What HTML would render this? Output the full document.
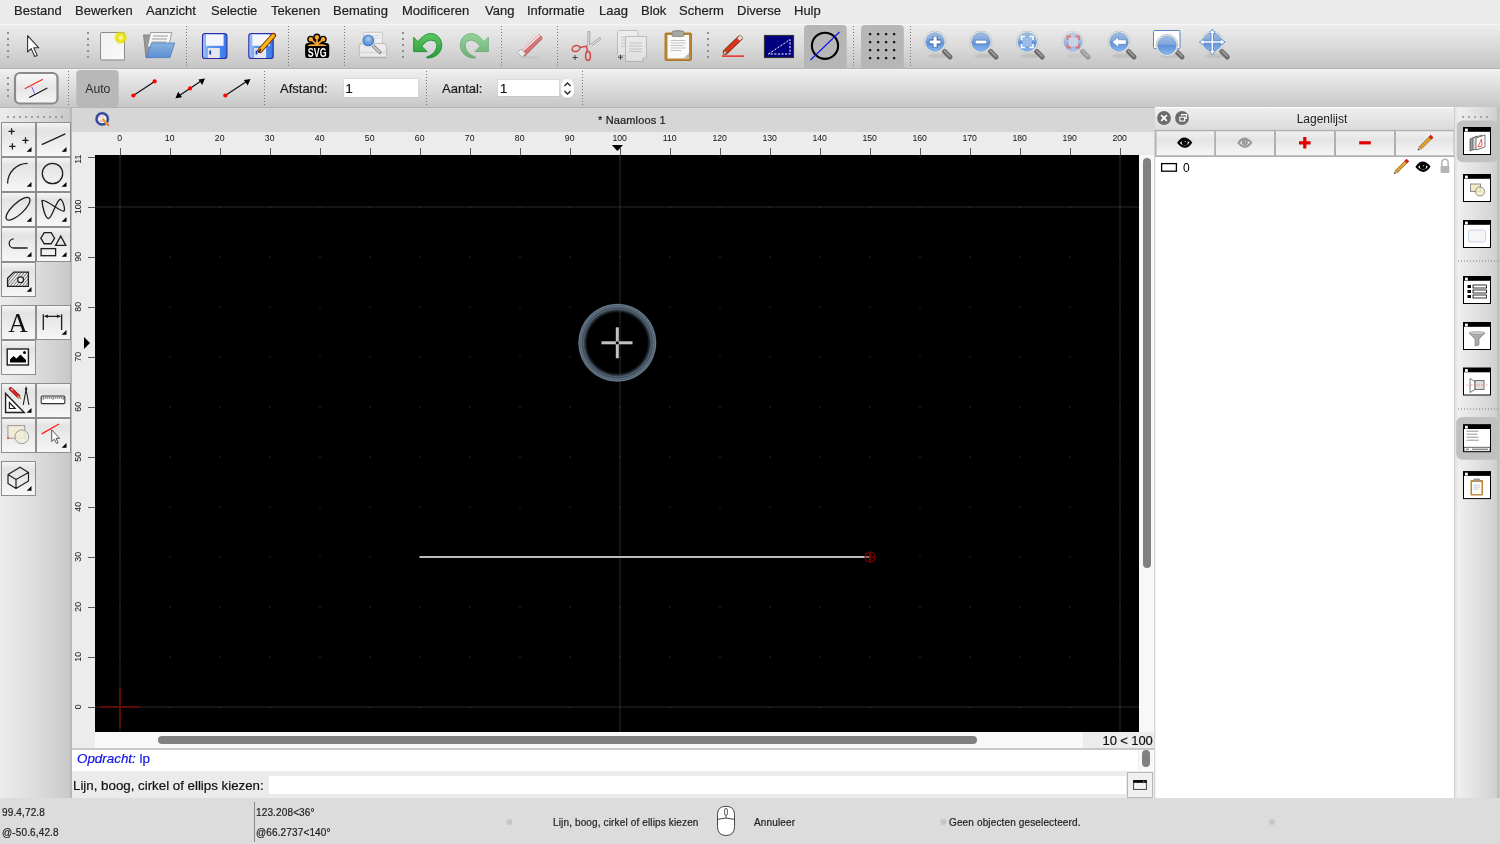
<!DOCTYPE html>
<html><head><meta charset="utf-8"><style>
*{box-sizing:border-box}
body{will-change:transform;margin:0;width:1500px;height:844px;overflow:hidden;position:relative;font-family:"Liberation Sans",sans-serif;background:#ececec;color:#222}
.a{position:absolute}
span{-webkit-text-stroke:0.2px currentColor}
.mi{position:absolute;top:3px;font-size:13px;color:#222;white-space:nowrap;-webkit-text-stroke:0.2px #222}
.sep{position:absolute;width:0;border-left:2px dotted #777}
.tb{position:absolute;border:1px solid #9a9a9a;background:linear-gradient(#f4f4f4,#e6e6e6 50%,#f2f2f2)}
.rl{position:absolute;font-size:9.5px;color:#111;text-align:center;width:30px;white-space:nowrap}
.rt{position:absolute;background:#555}
.st{position:absolute;font-size:10px;color:#1e1e1e;white-space:nowrap;letter-spacing:0.14px}
</style></head><body>
<!-- menu bar -->
<div class="a" style="left:0;top:0;width:1500px;height:24px;background:#ebebeb"></div>
<span class="mi" style="left:14px">Bestand</span>
<span class="mi" style="left:75px">Bewerken</span>
<span class="mi" style="left:146px">Aanzicht</span>
<span class="mi" style="left:211px">Selectie</span>
<span class="mi" style="left:271px">Tekenen</span>
<span class="mi" style="left:333px">Bemating</span>
<span class="mi" style="left:402px">Modificeren</span>
<span class="mi" style="left:485px">Vang</span>
<span class="mi" style="left:527px">Informatie</span>
<span class="mi" style="left:599px">Laag</span>
<span class="mi" style="left:641px">Blok</span>
<span class="mi" style="left:679px">Scherm</span>
<span class="mi" style="left:737px">Diverse</span>
<span class="mi" style="left:794px">Hulp</span>

<!-- toolbar 1 -->
<div class="a" style="left:0;top:24px;width:1500px;height:45px;background:linear-gradient(#ededed,#dadada 50%,#c5c5c5);border-top:1px solid #f6f6f6;border-bottom:1px solid #b2b2b2"></div>
<!-- toolbar 2 -->
<div class="a" style="left:0;top:69px;width:1500px;height:39px;background:linear-gradient(#efefef,#dcdcdc 50%,#c7c7c7);border-top:1px solid #f4f4f4;border-bottom:1px solid #b4b4b4"></div>

<!--TB-->
<svg class="a" style="left:0;top:24px" width="1260" height="84" viewBox="0 24 1260 84">
<defs>
<radialGradient id="glow" cx="0.5" cy="0.5" r="0.5"><stop offset="0" stop-color="#fff"/><stop offset="0.25" stop-color="#f4f060"/><stop offset="0.6" stop-color="#e8e000"/><stop offset="1" stop-color="#e8e000" stop-opacity="0"/></radialGradient>
<linearGradient id="page" x1="0" y1="0" x2="1" y2="1"><stop offset="0" stop-color="#f0f0f0"/><stop offset="1" stop-color="#fafafa"/></linearGradient>
<linearGradient id="fold" x1="0" y1="0" x2="0" y2="1"><stop offset="0" stop-color="#8ab4e0"/><stop offset="1" stop-color="#5a8fd0"/></linearGradient>
<linearGradient id="flop" x1="0" y1="0" x2="1" y2="0"><stop offset="0" stop-color="#a8c8f8"/><stop offset="0.3" stop-color="#5a98f0"/><stop offset="1" stop-color="#3a7ae8"/></linearGradient>
<radialGradient id="lens" cx="0.5" cy="0.35" r="0.6"><stop offset="0" stop-color="#b4cef0"/><stop offset="0.5" stop-color="#7aa6e0"/><stop offset="1" stop-color="#5a8ed8"/></radialGradient>
<linearGradient id="lens2" x1="0" y1="0" x2="0" y2="1"><stop offset="0" stop-color="#a2bce2"/><stop offset="0.45" stop-color="#7ea6dc"/><stop offset="0.5" stop-color="#5f90d6"/><stop offset="1" stop-color="#86b6f0"/></linearGradient>
<linearGradient id="grn" x1="0" y1="0" x2="0" y2="1"><stop offset="0" stop-color="#5cc860"/><stop offset="1" stop-color="#2a9a3a"/></linearGradient>
</defs>
<rect x="7" y="32" width="2" height="2" fill="#8e8e8e"/><rect x="7" y="38" width="2" height="2" fill="#8e8e8e"/><rect x="7" y="44" width="2" height="2" fill="#8e8e8e"/><rect x="7" y="50" width="2" height="2" fill="#8e8e8e"/><rect x="7" y="56" width="2" height="2" fill="#8e8e8e"/>
<rect x="87" y="32" width="2" height="2" fill="#8e8e8e"/><rect x="87" y="38" width="2" height="2" fill="#8e8e8e"/><rect x="87" y="44" width="2" height="2" fill="#8e8e8e"/><rect x="87" y="50" width="2" height="2" fill="#8e8e8e"/><rect x="87" y="56" width="2" height="2" fill="#8e8e8e"/>
<rect x="402" y="32" width="2" height="2" fill="#8e8e8e"/><rect x="402" y="38" width="2" height="2" fill="#8e8e8e"/><rect x="402" y="44" width="2" height="2" fill="#8e8e8e"/><rect x="402" y="50" width="2" height="2" fill="#8e8e8e"/><rect x="402" y="56" width="2" height="2" fill="#8e8e8e"/>
<rect x="707" y="32" width="2" height="2" fill="#8e8e8e"/><rect x="707" y="38" width="2" height="2" fill="#8e8e8e"/><rect x="707" y="44" width="2" height="2" fill="#8e8e8e"/><rect x="707" y="50" width="2" height="2" fill="#8e8e8e"/><rect x="707" y="56" width="2" height="2" fill="#8e8e8e"/>
<rect x="186.0" y="26" width="1" height="1" fill="#777"/><rect x="186.0" y="29" width="1" height="1" fill="#777"/><rect x="186.0" y="32" width="1" height="1" fill="#777"/><rect x="186.0" y="35" width="1" height="1" fill="#777"/><rect x="186.0" y="38" width="1" height="1" fill="#777"/><rect x="186.0" y="41" width="1" height="1" fill="#777"/><rect x="186.0" y="44" width="1" height="1" fill="#777"/><rect x="186.0" y="47" width="1" height="1" fill="#777"/><rect x="186.0" y="50" width="1" height="1" fill="#777"/><rect x="186.0" y="53" width="1" height="1" fill="#777"/><rect x="186.0" y="56" width="1" height="1" fill="#777"/><rect x="186.0" y="59" width="1" height="1" fill="#777"/><rect x="186.0" y="62" width="1" height="1" fill="#777"/><rect x="186.0" y="65" width="1" height="1" fill="#777"/>
<rect x="288.0" y="26" width="1" height="1" fill="#777"/><rect x="288.0" y="29" width="1" height="1" fill="#777"/><rect x="288.0" y="32" width="1" height="1" fill="#777"/><rect x="288.0" y="35" width="1" height="1" fill="#777"/><rect x="288.0" y="38" width="1" height="1" fill="#777"/><rect x="288.0" y="41" width="1" height="1" fill="#777"/><rect x="288.0" y="44" width="1" height="1" fill="#777"/><rect x="288.0" y="47" width="1" height="1" fill="#777"/><rect x="288.0" y="50" width="1" height="1" fill="#777"/><rect x="288.0" y="53" width="1" height="1" fill="#777"/><rect x="288.0" y="56" width="1" height="1" fill="#777"/><rect x="288.0" y="59" width="1" height="1" fill="#777"/><rect x="288.0" y="62" width="1" height="1" fill="#777"/><rect x="288.0" y="65" width="1" height="1" fill="#777"/>
<rect x="344.0" y="26" width="1" height="1" fill="#777"/><rect x="344.0" y="29" width="1" height="1" fill="#777"/><rect x="344.0" y="32" width="1" height="1" fill="#777"/><rect x="344.0" y="35" width="1" height="1" fill="#777"/><rect x="344.0" y="38" width="1" height="1" fill="#777"/><rect x="344.0" y="41" width="1" height="1" fill="#777"/><rect x="344.0" y="44" width="1" height="1" fill="#777"/><rect x="344.0" y="47" width="1" height="1" fill="#777"/><rect x="344.0" y="50" width="1" height="1" fill="#777"/><rect x="344.0" y="53" width="1" height="1" fill="#777"/><rect x="344.0" y="56" width="1" height="1" fill="#777"/><rect x="344.0" y="59" width="1" height="1" fill="#777"/><rect x="344.0" y="62" width="1" height="1" fill="#777"/><rect x="344.0" y="65" width="1" height="1" fill="#777"/>
<rect x="501.0" y="26" width="1" height="1" fill="#777"/><rect x="501.0" y="29" width="1" height="1" fill="#777"/><rect x="501.0" y="32" width="1" height="1" fill="#777"/><rect x="501.0" y="35" width="1" height="1" fill="#777"/><rect x="501.0" y="38" width="1" height="1" fill="#777"/><rect x="501.0" y="41" width="1" height="1" fill="#777"/><rect x="501.0" y="44" width="1" height="1" fill="#777"/><rect x="501.0" y="47" width="1" height="1" fill="#777"/><rect x="501.0" y="50" width="1" height="1" fill="#777"/><rect x="501.0" y="53" width="1" height="1" fill="#777"/><rect x="501.0" y="56" width="1" height="1" fill="#777"/><rect x="501.0" y="59" width="1" height="1" fill="#777"/><rect x="501.0" y="62" width="1" height="1" fill="#777"/><rect x="501.0" y="65" width="1" height="1" fill="#777"/>
<rect x="557.0" y="26" width="1" height="1" fill="#777"/><rect x="557.0" y="29" width="1" height="1" fill="#777"/><rect x="557.0" y="32" width="1" height="1" fill="#777"/><rect x="557.0" y="35" width="1" height="1" fill="#777"/><rect x="557.0" y="38" width="1" height="1" fill="#777"/><rect x="557.0" y="41" width="1" height="1" fill="#777"/><rect x="557.0" y="44" width="1" height="1" fill="#777"/><rect x="557.0" y="47" width="1" height="1" fill="#777"/><rect x="557.0" y="50" width="1" height="1" fill="#777"/><rect x="557.0" y="53" width="1" height="1" fill="#777"/><rect x="557.0" y="56" width="1" height="1" fill="#777"/><rect x="557.0" y="59" width="1" height="1" fill="#777"/><rect x="557.0" y="62" width="1" height="1" fill="#777"/><rect x="557.0" y="65" width="1" height="1" fill="#777"/>
<rect x="853.0" y="26" width="1" height="1" fill="#777"/><rect x="853.0" y="29" width="1" height="1" fill="#777"/><rect x="853.0" y="32" width="1" height="1" fill="#777"/><rect x="853.0" y="35" width="1" height="1" fill="#777"/><rect x="853.0" y="38" width="1" height="1" fill="#777"/><rect x="853.0" y="41" width="1" height="1" fill="#777"/><rect x="853.0" y="44" width="1" height="1" fill="#777"/><rect x="853.0" y="47" width="1" height="1" fill="#777"/><rect x="853.0" y="50" width="1" height="1" fill="#777"/><rect x="853.0" y="53" width="1" height="1" fill="#777"/><rect x="853.0" y="56" width="1" height="1" fill="#777"/><rect x="853.0" y="59" width="1" height="1" fill="#777"/><rect x="853.0" y="62" width="1" height="1" fill="#777"/><rect x="853.0" y="65" width="1" height="1" fill="#777"/>
<rect x="910.0" y="26" width="1" height="1" fill="#777"/><rect x="910.0" y="29" width="1" height="1" fill="#777"/><rect x="910.0" y="32" width="1" height="1" fill="#777"/><rect x="910.0" y="35" width="1" height="1" fill="#777"/><rect x="910.0" y="38" width="1" height="1" fill="#777"/><rect x="910.0" y="41" width="1" height="1" fill="#777"/><rect x="910.0" y="44" width="1" height="1" fill="#777"/><rect x="910.0" y="47" width="1" height="1" fill="#777"/><rect x="910.0" y="50" width="1" height="1" fill="#777"/><rect x="910.0" y="53" width="1" height="1" fill="#777"/><rect x="910.0" y="56" width="1" height="1" fill="#777"/><rect x="910.0" y="59" width="1" height="1" fill="#777"/><rect x="910.0" y="62" width="1" height="1" fill="#777"/><rect x="910.0" y="65" width="1" height="1" fill="#777"/>
<path d="M27.6 35.7V52L31.2 48.6L34.7 56.5L37.2 55.4L33.8 47.8H38.8Z" fill="#fff" stroke="#333" stroke-width="1.1" stroke-linejoin="round"/>
<rect x="100.5" y="32.5" width="24" height="27.5" rx="1" fill="url(#page)" stroke="#8a8a8a"/><rect x="101" y="59.6" width="24" height="1.6" fill="#aaa" opacity="0.6"/>
<circle cx="120.7" cy="37.7" r="7" fill="url(#glow)"/>
<path d="M143.5 35H151V57.5H146Z" fill="#9a9a9a" stroke="#777" stroke-width="0.8"/>
<path d="M150.5 32.5H171.8L168.5 47H147.5Z" fill="#f6f6f6" stroke="#8a8a8a" stroke-width="0.8"/><path d="M153 36h15M152 39h15M151.5 42h15" stroke="#bbb" stroke-width="1.4"/>
<path d="M151.5 43H174.7L170 57.6H146Z" fill="url(#fold)" stroke="#4a7cc0" stroke-width="0.8"/>
<rect x="202.5" y="33.5" width="24.4" height="25" rx="2.6" fill="url(#flop)" stroke="#2a2aa0" stroke-width="1.1"/><rect x="206" y="34.4" width="17.6" height="11.4" fill="#f4f6fc"/><rect x="207.8" y="48" width="12" height="10" fill="#e6e6ee"/><rect x="209.3" y="50.5" width="1.8" height="4" fill="#1a3ad0"/>
<rect x="248.8" y="33.5" width="24.4" height="25" rx="2.6" fill="url(#flop)" stroke="#2a2aa0" stroke-width="1.1"/><rect x="252.3" y="34.4" width="17.6" height="11.4" fill="#f4f6fc"/><rect x="254.10000000000002" y="48" width="12" height="10" fill="#e6e6ee"/><rect x="255.60000000000002" y="50.5" width="1.8" height="4" fill="#1a3ad0"/>
<path d="M260 50.5L273.5 35.5" stroke="#8a2a00" stroke-width="5.2" stroke-linecap="round"/><path d="M260.3 50.2L273.3 35.7" stroke="#f8b818" stroke-width="3.4" stroke-linecap="round"/><path d="M258.5 52.5L261 49" stroke="#333" stroke-width="1.6"/>
<path d="M317 44.5L310.8 39.3M317 44.5L323.1 39.3M317 44.5V37.2" stroke="#000" stroke-width="4"/>
<circle cx="316.9" cy="37.2" r="3.6" fill="#000"/>
<circle cx="310.8" cy="39.3" r="3.6" fill="#000"/>
<circle cx="323.1" cy="39.3" r="3.6" fill="#000"/>
<path d="M306 47Q306 43.5 309 43.2L313 42.5Q317 41 321 42.5L325 43.2Q328.5 43.5 328.5 47Z" fill="#000"/>
<rect x="305.1" y="42.9" width="24.1" height="15.2" rx="3.2" fill="#000"/>
<path d="M317 44.5L310.8 39.3M317 44.5L323.1 39.3M317 44.5V37.2" stroke="#f7a530" stroke-width="1.7"/>
<circle cx="316.9" cy="37.2" r="2.2" fill="#f7a530"/>
<circle cx="310.8" cy="39.3" r="2.2" fill="#f7a530"/>
<circle cx="323.1" cy="39.3" r="2.2" fill="#f7a530"/>
<path d="M307.3 45.9Q309 44 312 44.2H322Q325 44 327 45.9Z" fill="#f7a530"/>
<text transform="translate(317.2 56.5) scale(0.66 1)" text-anchor="middle" font-family="Liberation Sans" font-weight="bold" font-size="13.4" fill="#fff">SVG</text>
<rect x="363.5" y="32.3" width="18.8" height="14" rx="1" fill="#f2f2f2" stroke="#c4c4c4" stroke-width="0.9"/><path d="M370 35.5h10M370 38h10" stroke="#d4d4d4" stroke-width="1.2"/>
<path d="M359.3 47Q359.3 43.4 362.5 43.4H383.5Q386.7 43.4 386.7 47V55.5Q386.7 57.2 385 57.2H361Q359.3 57.2 359.3 55.5Z" fill="#ebebeb" stroke="#b4b4b4" stroke-width="0.9"/><path d="M360 52.5H386" stroke="#d6d6d6" stroke-width="1.2"/><rect x="360" y="57" width="26" height="1.4" fill="#999" opacity="0.45"/>
<path d="M373 45.8L379.8 52.3" stroke="#8a8a8a" stroke-width="3.6" stroke-linecap="round"/><path d="M373.3 46.1L379.5 52" stroke="#c8c8c8" stroke-width="1.8" stroke-linecap="round"/>
<circle cx="368.3" cy="40.5" r="6.6" fill="#fafafa" stroke="#d0d0d0" stroke-width="0.6"/><circle cx="368.3" cy="40.5" r="5.3" fill="url(#lens)" stroke="#3f7ed0" stroke-width="1.1"/>
<path d="M413.7 37.2L417.9 41.8C421 38 425.5 33.6 430.7 33.6C436.8 33.6 441.7 38.5 441.7 45.2C441.7 52 436 58 427.7 58L426.2 57.3C431.5 55.5 436.8 51.5 436.8 45.2C436.8 42 434 40.2 430.7 40.2C427 40.2 424 43.5 421.8 46.3L427 51.6H413.7Z" fill="url(#grn)" stroke="#1a8a35" stroke-width="0.9" stroke-linejoin="round"/>
<g opacity="0.58" transform="translate(902 0) scale(-1 1)"><path d="M413.7 37.2L417.9 41.8C421 38 425.5 33.6 430.7 33.6C436.8 33.6 441.7 38.5 441.7 45.2C441.7 52 436 58 427.7 58L426.2 57.3C431.5 55.5 436.8 51.5 436.8 45.2C436.8 42 434 40.2 430.7 40.2C427 40.2 424 43.5 421.8 46.3L427 51.6H413.7Z" fill="url(#grn)" stroke="#1a8a35" stroke-width="0.9" stroke-linejoin="round"/></g>
<g opacity="0.55"><path d="M519 51L536.5 34.5Q538 33 539.5 34.5L541.6 36.6Q543 38 541.5 39.5L524.5 56.5Z" fill="#d02020" stroke="#802020" stroke-width="0.8"/><path d="M521 49.5L538.5 33.5M522.5 51L540 35" stroke="#fff" stroke-width="1.6"/><path d="M517.5 52.5L521 49L525.5 53.5L522 57Z" fill="#fff" stroke="#888" stroke-width="0.8"/></g><ellipse cx="530" cy="57.5" rx="12" ry="1.2" fill="#bbb" opacity="0.5"/>
<g opacity="0.72"><path d="M587.8 46L588 31.5L590 31.8L589.5 45M590.5 44.5L600 37.5L600.3 39.5L591.5 46" fill="#eee" stroke="#666" stroke-width="0.7"/><ellipse cx="576" cy="48.5" rx="4" ry="2.8" transform="rotate(-20 576 48.5)" fill="none" stroke="#d01818" stroke-width="1.6"/><ellipse cx="588" cy="56" rx="2.4" ry="4.4" fill="none" stroke="#d01818" stroke-width="1.6"/><path d="M579.8 47.5L586.5 46.3L587.5 51.5" fill="none" stroke="#d01818" stroke-width="1.6"/></g><path d="M572.5 57.5h5M575 55v5" stroke="#333" stroke-width="0.9"/>
<g opacity="0.5"><rect x="617.5" y="30.5" width="20.5" height="25" rx="1" fill="#f4f4f4" stroke="#999"/><path d="M621 37h12M621 40h12M621 43h12M621 46h12" stroke="#aaa"/><path d="M625.5 36.5H646.5V57.5L643 61.4H625.5Z" fill="#f4f4f4" stroke="#999"/><path d="M629 43h13M629 46h13M629 49h13M629 51.5h13" stroke="#aaa"/><path d="M643 61.4V58H646.5" fill="#ddd" stroke="#999"/></g><path d="M618 57.2h5M620.5 54.7v5" stroke="#333" stroke-width="0.9"/>
<rect x="665" y="33" width="26.5" height="27.5" rx="1.2" fill="#c08530" stroke="#a06a20" stroke-width="0.8"/><rect x="667.5" y="35" width="21.5" height="23.5" fill="#fafafa"/><path d="M670.5 40.5h15M670.5 43h15M670.5 45.5h13M670.5 48h15M670.5 50.5h11" stroke="#bdbdbd" stroke-width="0.9"/><path d="M683.5 58.5L689 53V58.5Z" fill="#bbb"/><rect x="672" y="31" width="12" height="5.5" rx="1.2" fill="#a8a89e" stroke="#777" stroke-width="0.7"/><rect x="675" y="30" width="6" height="2" fill="#999"/>
<rect x="722" y="55.5" width="22" height="1.2" fill="#e00"/>
<path d="M725.5 52L740 38" stroke="#7a3a10" stroke-width="5.4" stroke-linecap="round"/><path d="M725.7 51.8L740 38" stroke="#e03020" stroke-width="3.8" stroke-linecap="round"/><path d="M738.5 39.5L741.5 36.5" stroke="#ddd" stroke-width="3.8"/><path d="M723 55L724.5 50.5L727 53Z" fill="#e8c8a0" stroke="#555" stroke-width="0.6"/>
<rect x="764.5" y="35.5" width="29" height="22" fill="#000080" stroke="#333" stroke-width="1.2"/><path d="M768.5 54L790 39.5V54Z" fill="none" stroke="#fff" stroke-width="1" stroke-dasharray="2.2 1.4"/>
<rect x="804" y="25" width="42.7" height="44" rx="4" fill="#b6b6b6"/>
<circle cx="825" cy="45.8" r="13.1" fill="none" stroke="#000" stroke-width="2.1"/><path d="M810.5 60L839.5 32" stroke="#1010f0" stroke-width="1.1"/>
<rect x="861" y="25" width="42.8" height="44" rx="4" fill="#b6b6b6"/>
<rect x="869" y="33" width="2.2" height="2.2" fill="#111"/>
<rect x="869" y="41" width="2.2" height="2.2" fill="#111"/>
<rect x="869" y="49" width="2.2" height="2.2" fill="#111"/>
<rect x="869" y="57" width="2.2" height="2.2" fill="#111"/>
<rect x="877" y="33" width="2.2" height="2.2" fill="#111"/>
<rect x="877" y="41" width="2.2" height="2.2" fill="#111"/>
<rect x="877" y="49" width="2.2" height="2.2" fill="#111"/>
<rect x="877" y="57" width="2.2" height="2.2" fill="#111"/>
<rect x="885" y="33" width="2.2" height="2.2" fill="#111"/>
<rect x="885" y="41" width="2.2" height="2.2" fill="#111"/>
<rect x="885" y="49" width="2.2" height="2.2" fill="#111"/>
<rect x="885" y="57" width="2.2" height="2.2" fill="#111"/>
<rect x="893" y="33" width="2.2" height="2.2" fill="#111"/>
<rect x="893" y="41" width="2.2" height="2.2" fill="#111"/>
<rect x="893" y="49" width="2.2" height="2.2" fill="#111"/>
<rect x="893" y="57" width="2.2" height="2.2" fill="#111"/>
<ellipse cx="938" cy="56" rx="10" ry="2.2" fill="#888" opacity="0.22"/><path d="M944.3 51.3L950 57" stroke="#6c6c6c" stroke-width="5" stroke-linecap="round"/><path d="M944.5 50.8L950 56.3" stroke="#a4a4a4" stroke-width="1.4" stroke-linecap="round"/><circle cx="935" cy="42" r="11" fill="#f3f3ee" stroke="#c2c2ba" stroke-width="0.9"/><circle cx="935" cy="42" r="9.4" fill="url(#lens2)" stroke="#6a94cc" stroke-width="0.5"/><path d="M929.2 42h11.9M935.1 36.1v11.7" stroke="#2a5aa0" stroke-width="4.8"/><path d="M929.7 42h10.9M935.1 36.6v10.7" stroke="#fff" stroke-width="3.2"/>
<ellipse cx="984" cy="56" rx="10" ry="2.2" fill="#888" opacity="0.22"/><path d="M990.3 51.3L996 57" stroke="#6c6c6c" stroke-width="5" stroke-linecap="round"/><path d="M990.5 50.8L996 56.3" stroke="#a4a4a4" stroke-width="1.4" stroke-linecap="round"/><circle cx="981" cy="42" r="11" fill="#f3f3ee" stroke="#c2c2ba" stroke-width="0.9"/><circle cx="981" cy="42" r="9.4" fill="url(#lens2)" stroke="#6a94cc" stroke-width="0.5"/><path d="M975 42h12" stroke="#3a6ab0" stroke-width="4.4"/><path d="M975.5 42h11" stroke="#fff" stroke-width="3"/>
<ellipse cx="1030.2" cy="56" rx="10" ry="2.2" fill="#888" opacity="0.22"/><path d="M1036.5 51.3L1042.2 57" stroke="#6c6c6c" stroke-width="5" stroke-linecap="round"/><path d="M1036.7 50.8L1042.2 56.3" stroke="#a4a4a4" stroke-width="1.4" stroke-linecap="round"/><circle cx="1027.2" cy="42" r="11" fill="#f3f3ee" stroke="#c2c2ba" stroke-width="0.9"/><circle cx="1027.2" cy="42" r="9.4" fill="url(#lens2)" stroke="#6a94cc" stroke-width="0.5"/><rect x="1022.5" y="37.5" width="9.4" height="9" fill="#9cbce8"/><path d="M1021.5 40V36.5H1025M1029.5 36.5H1033V40M1033 44V47.5H1029.5M1025 47.5H1021.5V44" fill="none" stroke="#fff" stroke-width="1.6"/>
<g opacity="0.55"><ellipse cx="1076" cy="56" rx="10" ry="2.2" fill="#888" opacity="0.22"/><path d="M1082.3 51.3L1088 57" stroke="#6c6c6c" stroke-width="5" stroke-linecap="round"/><path d="M1082.5 50.8L1088 56.3" stroke="#a4a4a4" stroke-width="1.4" stroke-linecap="round"/><circle cx="1073" cy="42" r="11" fill="#f3f3ee" stroke="#c2c2ba" stroke-width="0.9"/><circle cx="1073" cy="42" r="9.4" fill="url(#lens2)" stroke="#6a94cc" stroke-width="0.5"/><rect x="1068.5" y="37.5" width="9.4" height="9" fill="#b8cce8"/><path d="M1067.5 40V36.5H1071M1075.5 36.5H1079V40M1079 44V47.5H1075.5M1071 47.5H1067.5V44" fill="none" stroke="#e02020" stroke-width="1.8"/></g>
<ellipse cx="1122" cy="56" rx="10" ry="2.2" fill="#888" opacity="0.22"/><path d="M1128.3 51.3L1134 57" stroke="#6c6c6c" stroke-width="5" stroke-linecap="round"/><path d="M1128.5 50.8L1134 56.3" stroke="#a4a4a4" stroke-width="1.4" stroke-linecap="round"/><circle cx="1119" cy="42" r="11" fill="#f3f3ee" stroke="#c2c2ba" stroke-width="0.9"/><circle cx="1119" cy="42" r="9.4" fill="url(#lens2)" stroke="#6a94cc" stroke-width="0.5"/><path d="M1112 42L1118.5 37V39.8H1126.2V44.3H1118.5V47.2Z" fill="#fff" stroke="#3a6ab0" stroke-width="0.5"/>
<rect x="1153.5" y="30.5" width="26.5" height="18" rx="1" fill="#fff" stroke="#5a86c8" stroke-width="1"/>
<ellipse cx="1170" cy="56" rx="10" ry="2.2" fill="#888" opacity="0.22"/><path d="M1176.3 51.3L1182 57" stroke="#6c6c6c" stroke-width="5" stroke-linecap="round"/><path d="M1176.5 50.8L1182 56.3" stroke="#a4a4a4" stroke-width="1.4" stroke-linecap="round"/><circle cx="1167" cy="45.3" r="11" fill="#f3f3ee" stroke="#c2c2ba" stroke-width="0.9"/><circle cx="1167" cy="45.3" r="9.4" fill="url(#lens2)" stroke="#6a94cc" stroke-width="0.5"/>
<ellipse cx="1215.3" cy="56" rx="10" ry="2.2" fill="#888" opacity="0.22"/><path d="M1221.6 51.3L1227.3 57" stroke="#6c6c6c" stroke-width="5" stroke-linecap="round"/><path d="M1221.8 50.8L1227.3 56.3" stroke="#a4a4a4" stroke-width="1.4" stroke-linecap="round"/><circle cx="1212.3" cy="42" r="11" fill="#f3f3ee" stroke="#c2c2ba" stroke-width="0.9"/><circle cx="1212.3" cy="42" r="9.4" fill="url(#lens2)" stroke="#6a94cc" stroke-width="0.5"/><path d="M1212.30 29.00L1215.30 33.60L1213.50 33.60L1213.50 40.80L1220.70 40.80L1220.70 39.00L1225.30 42.00L1220.70 45.00L1220.70 43.20L1213.50 43.20L1213.50 50.40L1215.30 50.40L1212.30 55.00L1209.30 50.40L1211.10 50.40L1211.10 43.20L1203.90 43.20L1203.90 45.00L1199.30 42.00L1203.90 39.00L1203.90 40.80L1211.10 40.80L1211.10 33.60L1209.30 33.60Z" fill="#fff" stroke="#4f7fc8" stroke-width="0.8" stroke-linejoin="round"/>
<rect x="7" y="77" width="2" height="2" fill="#8e8e8e"/><rect x="7" y="83" width="2" height="2" fill="#8e8e8e"/><rect x="7" y="89" width="2" height="2" fill="#8e8e8e"/><rect x="7" y="95" width="2" height="2" fill="#8e8e8e"/>
<linearGradient id="b2g" x1="0" y1="0" x2="0" y2="1"><stop offset="0" stop-color="#f8f8f8"/><stop offset="0.5" stop-color="#e6e6e6"/><stop offset="1" stop-color="#f6f6f6"/></linearGradient><rect x="15" y="73" width="42.5" height="30.5" rx="5" fill="url(#b2g)" stroke="#8a8a8a" stroke-width="2.2"/>
<path d="M24.8 88.7L42.8 79.3" stroke="#ff2020" stroke-width="1.1"/><path d="M29.2 97.4L47.3 88.1" stroke="#111" stroke-width="1.1"/><path d="M31.7 86.8L34.7 93.6" stroke="#5050ff" stroke-width="0.9"/>
<rect x="68.0" y="71" width="1" height="1" fill="#777"/><rect x="68.0" y="74" width="1" height="1" fill="#777"/><rect x="68.0" y="77" width="1" height="1" fill="#777"/><rect x="68.0" y="80" width="1" height="1" fill="#777"/><rect x="68.0" y="83" width="1" height="1" fill="#777"/><rect x="68.0" y="86" width="1" height="1" fill="#777"/><rect x="68.0" y="89" width="1" height="1" fill="#777"/><rect x="68.0" y="92" width="1" height="1" fill="#777"/><rect x="68.0" y="95" width="1" height="1" fill="#777"/><rect x="68.0" y="98" width="1" height="1" fill="#777"/><rect x="68.0" y="101" width="1" height="1" fill="#777"/><rect x="68.0" y="104" width="1" height="1" fill="#777"/>
<rect x="76.3" y="69.9" width="42.4" height="37" rx="4" fill="#b8b8b8"/>
<text x="97.8" y="93" text-anchor="middle" font-family="Liberation Sans" font-size="12.2" fill="#2a2a2a">Auto</text>
<path d="M133.4 95.5L154.6 81.4" stroke="#111" stroke-width="1.2"/><circle cx="133.4" cy="95.5" r="2.1" fill="#f00"/><circle cx="154.6" cy="81.4" r="2.1" fill="#f00"/>
<path d="M178 96.5L202.5 80" stroke="#111" stroke-width="1.2"/><path d="M175.4 98.3L178.2 91.8L182 97.2ZM205 78.4L202.2 84.9L198.4 79.5Z" fill="#000"/><circle cx="190" cy="88.4" r="2.1" fill="#f00"/>
<path d="M225.3 95.5L248 80.5" stroke="#111" stroke-width="1.2"/><path d="M250.5 78.9L247.7 85.4L243.9 80Z" fill="#000"/><circle cx="225.3" cy="95.5" r="2.1" fill="#f00"/>
<rect x="264.0" y="71" width="1" height="1" fill="#777"/><rect x="264.0" y="74" width="1" height="1" fill="#777"/><rect x="264.0" y="77" width="1" height="1" fill="#777"/><rect x="264.0" y="80" width="1" height="1" fill="#777"/><rect x="264.0" y="83" width="1" height="1" fill="#777"/><rect x="264.0" y="86" width="1" height="1" fill="#777"/><rect x="264.0" y="89" width="1" height="1" fill="#777"/><rect x="264.0" y="92" width="1" height="1" fill="#777"/><rect x="264.0" y="95" width="1" height="1" fill="#777"/><rect x="264.0" y="98" width="1" height="1" fill="#777"/><rect x="264.0" y="101" width="1" height="1" fill="#777"/><rect x="264.0" y="104" width="1" height="1" fill="#777"/>
<rect x="426.0" y="71" width="1" height="1" fill="#777"/><rect x="426.0" y="74" width="1" height="1" fill="#777"/><rect x="426.0" y="77" width="1" height="1" fill="#777"/><rect x="426.0" y="80" width="1" height="1" fill="#777"/><rect x="426.0" y="83" width="1" height="1" fill="#777"/><rect x="426.0" y="86" width="1" height="1" fill="#777"/><rect x="426.0" y="89" width="1" height="1" fill="#777"/><rect x="426.0" y="92" width="1" height="1" fill="#777"/><rect x="426.0" y="95" width="1" height="1" fill="#777"/><rect x="426.0" y="98" width="1" height="1" fill="#777"/><rect x="426.0" y="101" width="1" height="1" fill="#777"/><rect x="426.0" y="104" width="1" height="1" fill="#777"/>
<rect x="582.0" y="71" width="1" height="1" fill="#777"/><rect x="582.0" y="74" width="1" height="1" fill="#777"/><rect x="582.0" y="77" width="1" height="1" fill="#777"/><rect x="582.0" y="80" width="1" height="1" fill="#777"/><rect x="582.0" y="83" width="1" height="1" fill="#777"/><rect x="582.0" y="86" width="1" height="1" fill="#777"/><rect x="582.0" y="89" width="1" height="1" fill="#777"/><rect x="582.0" y="92" width="1" height="1" fill="#777"/><rect x="582.0" y="95" width="1" height="1" fill="#777"/><rect x="582.0" y="98" width="1" height="1" fill="#777"/><rect x="582.0" y="101" width="1" height="1" fill="#777"/><rect x="582.0" y="104" width="1" height="1" fill="#777"/>
</svg>
<!--/TB-->
<!-- tb2 inputs -->
<span class="a" style="left:280px;top:81px;font-size:13px;color:#1a1a1a">Afstand:</span>
<div class="a" style="left:344px;top:79px;width:74px;height:19px;background:#fff;border-bottom:1px solid #c8c8c8;box-shadow:0 0 0 0.5px #d0d0d0"></div>
<span class="a" style="left:345.5px;top:81px;font-size:13px;color:#111">1</span>
<span class="a" style="left:442px;top:81px;font-size:13px;color:#1a1a1a">Aantal:</span>
<div class="a" style="left:498px;top:80px;width:61px;height:17px;background:#fff;border-bottom:1px solid #c8c8c8;box-shadow:0 0 0 0.5px #d0d0d0"></div>
<span class="a" style="left:500px;top:81px;font-size:13px;color:#111">1</span>
<div class="a" style="left:561px;top:79px;width:13px;height:19px;background:#fff;border-radius:6px;box-shadow:0 0.5px 1px #aaa"></div>
<svg class="a" style="left:561px;top:79px" width="13" height="19" viewBox="0 0 13 19"><path d="M3.5 7L6.5 4L9.5 7M3.5 12L6.5 15L9.5 12" fill="none" stroke="#222" stroke-width="1.3"/></svg>
<!-- left dock -->
<!--LEFT-->
<svg class="a" style="left:0;top:108px" width="72" height="690" viewBox="0 108 72 690">
<defs><linearGradient id="bg" x1="0" y1="0" x2="0" y2="1"><stop offset="0" stop-color="#f6f6f6"/><stop offset="0.22" stop-color="#e3e3e3"/><stop offset="1" stop-color="#f7f7f7"/></linearGradient><linearGradient id="dk" x1="0" y1="0" x2="1" y2="0"><stop offset="0" stop-color="#ececec"/><stop offset="0.5" stop-color="#dddddd"/><stop offset="1" stop-color="#c9c9c9"/></linearGradient></defs>
<rect x="0" y="108" width="70" height="690" fill="url(#dk)"/>
<rect x="70" y="108" width="2" height="690" fill="#b8b8b8"/>
<rect x="7" y="116" width="2" height="2" fill="#9c9c9c"/>
<rect x="13" y="116" width="2" height="2" fill="#9c9c9c"/>
<rect x="19" y="116" width="2" height="2" fill="#9c9c9c"/>
<rect x="25" y="116" width="2" height="2" fill="#9c9c9c"/>
<rect x="31" y="116" width="2" height="2" fill="#9c9c9c"/>
<rect x="37" y="116" width="2" height="2" fill="#9c9c9c"/>
<rect x="43" y="116" width="2" height="2" fill="#9c9c9c"/>
<rect x="49" y="116" width="2" height="2" fill="#9c9c9c"/>
<rect x="55" y="116" width="2" height="2" fill="#9c9c9c"/>
<rect x="61" y="116" width="2" height="2" fill="#9c9c9c"/>
<rect x="1.5" y="122.5" width="34" height="34" fill="url(#bg)" stroke="#8e8e8e" stroke-width="1"/>
<rect x="36.5" y="122.5" width="34" height="34" fill="url(#bg)" stroke="#8e8e8e" stroke-width="1"/>
<rect x="1.5" y="157.5" width="34" height="34" fill="url(#bg)" stroke="#8e8e8e" stroke-width="1"/>
<rect x="36.5" y="157.5" width="34" height="34" fill="url(#bg)" stroke="#8e8e8e" stroke-width="1"/>
<rect x="1.5" y="192.5" width="34" height="34" fill="url(#bg)" stroke="#8e8e8e" stroke-width="1"/>
<rect x="36.5" y="192.5" width="34" height="34" fill="url(#bg)" stroke="#8e8e8e" stroke-width="1"/>
<rect x="1.5" y="227.5" width="34" height="34" fill="url(#bg)" stroke="#8e8e8e" stroke-width="1"/>
<rect x="36.5" y="227.5" width="34" height="34" fill="url(#bg)" stroke="#8e8e8e" stroke-width="1"/>
<rect x="1.5" y="262.5" width="34" height="34" fill="url(#bg)" stroke="#8e8e8e" stroke-width="1"/>
<rect x="1.5" y="305.5" width="34" height="34" fill="url(#bg)" stroke="#8e8e8e" stroke-width="1"/>
<rect x="1.5" y="340.5" width="34" height="34" fill="url(#bg)" stroke="#8e8e8e" stroke-width="1"/>
<rect x="36.5" y="305.5" width="34" height="34" fill="url(#bg)" stroke="#8e8e8e" stroke-width="1"/>
<rect x="1.5" y="383.5" width="34" height="34" fill="url(#bg)" stroke="#8e8e8e" stroke-width="1"/>
<rect x="36.5" y="383.5" width="34" height="34" fill="url(#bg)" stroke="#8e8e8e" stroke-width="1"/>
<rect x="1.5" y="418.5" width="34" height="34" fill="url(#bg)" stroke="#8e8e8e" stroke-width="1"/>
<rect x="36.5" y="418.5" width="34" height="34" fill="url(#bg)" stroke="#8e8e8e" stroke-width="1"/>
<rect x="1.5" y="461.5" width="34" height="34" fill="url(#bg)" stroke="#8e8e8e" stroke-width="1"/>
<path d="M8.5 131.4h6.2M11.6 128.3v6.2M22.4 140.3h6.2M25.5 137.2v6.2M9.3 146.3h6.2M12.4 143.2v6.2" fill="none" stroke="#1e1e1e" stroke-width="1.3" stroke-width="1.4"/>
<path d="M31.5 147V151.8H26.7z" fill="#000"/>
<path d="M41.8 144.6L65.3 133.8" fill="none" stroke="#1e1e1e" stroke-width="1.3"/>
<path d="M66.5 147V151.8H61.7z" fill="#000"/>
<path d="M7.6 183.4A20 20 0 0 1 27.6 163.4" fill="none" stroke="#1e1e1e" stroke-width="1.3"/>
<path d="M31.5 182V186.8H26.7z" fill="#000"/>
<circle cx="52.5" cy="173.5" r="10.2" fill="none" stroke="#1e1e1e" stroke-width="1.3"/>
<path d="M66.5 182V186.8H61.7z" fill="#000"/>
<ellipse cx="18" cy="208.8" rx="15.5" ry="5.6" transform="rotate(-43 18 208.8)" fill="none" stroke="#1e1e1e" stroke-width="1.3"/>
<path d="M31.5 217V221.8H26.7z" fill="#000"/>
<path d="M42 200.5C42.5 208 45.5 218.5 48.5 218.6C52 218.6 56 201 60 199.3C62.5 198.5 65.5 209 64 211C62 213 46 199 42 200.5Z" fill="none" stroke="#1e1e1e" stroke-width="1.3"/>
<path d="M66.5 217V221.8H61.7z" fill="#000"/>
<path d="M13.8 238.8A4.6 4.6 0 0 0 13.8 248H27.6" fill="none" stroke="#1e1e1e" stroke-width="1.3"/>
<path d="M31.5 252V256.8H26.7z" fill="#000"/>
<polygon points="54.60,238.20 51.15,243.76 44.25,243.76 40.80,238.20 44.25,232.64 51.15,232.64" fill="none" stroke="#1e1e1e" stroke-width="1.3"/>
<path d="M55.6 245.4H65.8L60.7 236.1Z" fill="none" stroke="#1e1e1e" stroke-width="1.3"/>
<rect x="41.1" y="248.6" width="14.5" height="7.1" fill="none" stroke="#1e1e1e" stroke-width="1.3"/>
<path d="M66.5 252V256.8H61.7z" fill="#000"/>
<defs><clipPath id="hc"><path d="M7.6 278.3L13.8 272.1H28.4V286.3H7.6Z"/></clipPath></defs>
<path d="M-8 290L10 268M-5 290L13 268M-2 290L16 268M1 290L19 268M4 290L22 268M7 290L25 268M10 290L28 268M13 290L31 268M16 290L34 268M19 290L37 268M22 290L40 268M25 290L43 268M28 290L46 268" stroke="#555" stroke-width="0.8" clip-path="url(#hc)"/>
<circle cx="20.6" cy="279.7" r="2.9" fill="#eee" stroke="#1e1e1e" stroke-width="1.2"/>
<path d="M7.6 278.3L13.8 272.1H28.4V286.3H7.6Z" fill="none" stroke="#1e1e1e" stroke-width="1.3"/>
<path d="M31.5 287V291.8H26.7z" fill="#000"/>
<text x="18" y="331.8" text-anchor="middle" font-family="Liberation Serif" font-size="27" fill="#111">A</text>
<path d="M43.3 314.2V330M61.6 314.2V330M45 316.3H60" fill="none" stroke="#1e1e1e" stroke-width="1.3"/>
<path d="M43.8 316.3L48 314.5V318.1ZM61.1 316.3L56.9 314.5V318.1Z" fill="#1e1e1e"/>
<path d="M66.5 330V334.8H61.7z" fill="#000"/>
<rect x="7.2" y="349" width="21.2" height="16" fill="#fff" stroke="#1e1e1e" stroke-width="1.4"/>
<path d="M10 362.6V359.5L13.5 356L16.5 358.5L20.5 354.5L26 360V362.6Z" fill="#000"/><circle cx="24.5" cy="352.4" r="1.5" fill="#000"/>
<path d="M5.6 393.5V412.5H24.2Z" fill="#fff" stroke="#1e1e1e" stroke-width="1.4"/><path d="M9.4 402.5V408.5H15.2Z" fill="none" stroke="#1e1e1e" stroke-width="1.2"/>
<path d="M10.6 388.8L18.6 396.4" stroke="#8a1010" stroke-width="3.6" stroke-linecap="round"/><path d="M10.8 389L18.4 396.2" stroke="#e02424" stroke-width="2.2" stroke-linecap="round"/><path d="M11 388.6L13 390.4" stroke="#ffb0b0" stroke-width="1.2"/><path d="M18.3 395.2L21.2 399L17.3 397.2Z" fill="#e8b878" stroke="#a06a30" stroke-width="0.5"/>
<path d="M23.2 405L26.1 389.5L28.9 405" fill="none" stroke="#1e1e1e" stroke-width="1.1"/><circle cx="26.1" cy="389" r="1.2" fill="#1e1e1e"/><path d="M26.1 386.5V388" stroke="#1e1e1e"/>
<path d="M31.5 408V412.8H26.7z" fill="#000"/>
<rect x="41.2" y="396" width="23.6" height="7.6" rx="1" fill="#fff" stroke="#333" stroke-width="1.1"/>
<path d="M43.2 396.6v3.2M45.2 396.6v2.2M47.2 396.6v2.2M49.2 396.6v2.2M51.2 396.6v2.2M53.2 396.6v3.2M55.2 396.6v2.2M57.2 396.6v2.2M59.2 396.6v2.2M61.2 396.6v2.2M63.2 396.6v3.2" stroke="#333" stroke-width="0.8"/>
<rect x="7.9" y="425.6" width="16.8" height="12.6" fill="#f1ecd8" stroke="#9a9a9a" stroke-width="1"/>
<circle cx="21.8" cy="436.8" r="6.9" fill="#f1ecd8" fill-opacity="0.85" stroke="#9a9a9a" stroke-width="1"/>
<circle cx="8.1" cy="438" r="1.3" fill="#ff6060"/>
<path d="M41.7 433.8L59 424" stroke="#ff2020" stroke-width="1.4"/>
<path d="M51.7 429.7V441.5L54.3 439.2L56.6 443.5L58.2 442.7L56 438.4H59.5Z" fill="#fff" stroke="#444" stroke-width="0.9"/>
<path d="M66.5 443V447.8H61.7z" fill="#000"/>
<path d="M8 474.5L20 467.2L28.5 472.5L16 479.5ZM8 474.5V483.5L16 488.5L28.5 481V472.5M16 479.5V488.5" fill="none" stroke="#222" stroke-width="1.2" stroke-linejoin="round"/>
<path d="M31.5 486V490.8H26.7z" fill="#000"/>
</svg>
<!--/LEFT-->

<!-- MDI window -->
<div class="a" style="left:72px;top:108px;width:1084px;height:24px;background:#d6d6d6"></div>
<span class="a" style="left:598px;top:113.8px;font-size:11px;letter-spacing:0.15px;color:#1a1a1a">* Naamloos 1</span>
<div class="a" style="left:72px;top:132px;width:1084px;height:23px;background:#ececec"></div>
<div class="a" style="left:72px;top:155px;width:23px;height:577px;background:#ececec"></div>
<!--CANVAS-->
<svg class="a" style="left:95px;top:155px" width="1044" height="577" viewBox="95 155 1044 577">
<rect x="95" y="155" width="1044" height="577" fill="#000"/>
<rect x="119.25" y="155" width="1.5" height="577" fill="#1b1b1b"/>
<rect x="619.25" y="155" width="1.5" height="577" fill="#1b1b1b"/>
<rect x="1119.25" y="155" width="1.5" height="577" fill="#1b1b1b"/>
<rect x="95" y="206.25" width="1044" height="1.5" fill="#1b1b1b"/>
<rect x="95" y="706.25" width="1044" height="1.5" fill="#1b1b1b"/>
<path fill="#4a4a4a" d="M119.5 156.5h1v1h-1zM119.5 206.5h1v1h-1zM119.5 256.5h1v1h-1zM119.5 306.5h1v1h-1zM119.5 356.5h1v1h-1zM119.5 406.5h1v1h-1zM119.5 456.5h1v1h-1zM119.5 506.5h1v1h-1zM119.5 556.5h1v1h-1zM119.5 606.5h1v1h-1zM119.5 656.5h1v1h-1zM119.5 706.5h1v1h-1zM169.5 156.5h1v1h-1zM169.5 206.5h1v1h-1zM169.5 256.5h1v1h-1zM169.5 306.5h1v1h-1zM169.5 356.5h1v1h-1zM169.5 406.5h1v1h-1zM169.5 456.5h1v1h-1zM169.5 506.5h1v1h-1zM169.5 556.5h1v1h-1zM169.5 606.5h1v1h-1zM169.5 656.5h1v1h-1zM169.5 706.5h1v1h-1zM219.5 156.5h1v1h-1zM219.5 206.5h1v1h-1zM219.5 256.5h1v1h-1zM219.5 306.5h1v1h-1zM219.5 356.5h1v1h-1zM219.5 406.5h1v1h-1zM219.5 456.5h1v1h-1zM219.5 506.5h1v1h-1zM219.5 556.5h1v1h-1zM219.5 606.5h1v1h-1zM219.5 656.5h1v1h-1zM219.5 706.5h1v1h-1zM269.5 156.5h1v1h-1zM269.5 206.5h1v1h-1zM269.5 256.5h1v1h-1zM269.5 306.5h1v1h-1zM269.5 356.5h1v1h-1zM269.5 406.5h1v1h-1zM269.5 456.5h1v1h-1zM269.5 506.5h1v1h-1zM269.5 556.5h1v1h-1zM269.5 606.5h1v1h-1zM269.5 656.5h1v1h-1zM269.5 706.5h1v1h-1zM319.5 156.5h1v1h-1zM319.5 206.5h1v1h-1zM319.5 256.5h1v1h-1zM319.5 306.5h1v1h-1zM319.5 356.5h1v1h-1zM319.5 406.5h1v1h-1zM319.5 456.5h1v1h-1zM319.5 506.5h1v1h-1zM319.5 556.5h1v1h-1zM319.5 606.5h1v1h-1zM319.5 656.5h1v1h-1zM319.5 706.5h1v1h-1zM369.5 156.5h1v1h-1zM369.5 206.5h1v1h-1zM369.5 256.5h1v1h-1zM369.5 306.5h1v1h-1zM369.5 356.5h1v1h-1zM369.5 406.5h1v1h-1zM369.5 456.5h1v1h-1zM369.5 506.5h1v1h-1zM369.5 556.5h1v1h-1zM369.5 606.5h1v1h-1zM369.5 656.5h1v1h-1zM369.5 706.5h1v1h-1zM419.5 156.5h1v1h-1zM419.5 206.5h1v1h-1zM419.5 256.5h1v1h-1zM419.5 306.5h1v1h-1zM419.5 356.5h1v1h-1zM419.5 406.5h1v1h-1zM419.5 456.5h1v1h-1zM419.5 506.5h1v1h-1zM419.5 556.5h1v1h-1zM419.5 606.5h1v1h-1zM419.5 656.5h1v1h-1zM419.5 706.5h1v1h-1zM469.5 156.5h1v1h-1zM469.5 206.5h1v1h-1zM469.5 256.5h1v1h-1zM469.5 306.5h1v1h-1zM469.5 356.5h1v1h-1zM469.5 406.5h1v1h-1zM469.5 456.5h1v1h-1zM469.5 506.5h1v1h-1zM469.5 556.5h1v1h-1zM469.5 606.5h1v1h-1zM469.5 656.5h1v1h-1zM469.5 706.5h1v1h-1zM519.5 156.5h1v1h-1zM519.5 206.5h1v1h-1zM519.5 256.5h1v1h-1zM519.5 306.5h1v1h-1zM519.5 356.5h1v1h-1zM519.5 406.5h1v1h-1zM519.5 456.5h1v1h-1zM519.5 506.5h1v1h-1zM519.5 556.5h1v1h-1zM519.5 606.5h1v1h-1zM519.5 656.5h1v1h-1zM519.5 706.5h1v1h-1zM569.5 156.5h1v1h-1zM569.5 206.5h1v1h-1zM569.5 256.5h1v1h-1zM569.5 306.5h1v1h-1zM569.5 356.5h1v1h-1zM569.5 406.5h1v1h-1zM569.5 456.5h1v1h-1zM569.5 506.5h1v1h-1zM569.5 556.5h1v1h-1zM569.5 606.5h1v1h-1zM569.5 656.5h1v1h-1zM569.5 706.5h1v1h-1zM619.5 156.5h1v1h-1zM619.5 206.5h1v1h-1zM619.5 256.5h1v1h-1zM619.5 306.5h1v1h-1zM619.5 356.5h1v1h-1zM619.5 406.5h1v1h-1zM619.5 456.5h1v1h-1zM619.5 506.5h1v1h-1zM619.5 556.5h1v1h-1zM619.5 606.5h1v1h-1zM619.5 656.5h1v1h-1zM619.5 706.5h1v1h-1zM669.5 156.5h1v1h-1zM669.5 206.5h1v1h-1zM669.5 256.5h1v1h-1zM669.5 306.5h1v1h-1zM669.5 356.5h1v1h-1zM669.5 406.5h1v1h-1zM669.5 456.5h1v1h-1zM669.5 506.5h1v1h-1zM669.5 556.5h1v1h-1zM669.5 606.5h1v1h-1zM669.5 656.5h1v1h-1zM669.5 706.5h1v1h-1zM719.5 156.5h1v1h-1zM719.5 206.5h1v1h-1zM719.5 256.5h1v1h-1zM719.5 306.5h1v1h-1zM719.5 356.5h1v1h-1zM719.5 406.5h1v1h-1zM719.5 456.5h1v1h-1zM719.5 506.5h1v1h-1zM719.5 556.5h1v1h-1zM719.5 606.5h1v1h-1zM719.5 656.5h1v1h-1zM719.5 706.5h1v1h-1zM769.5 156.5h1v1h-1zM769.5 206.5h1v1h-1zM769.5 256.5h1v1h-1zM769.5 306.5h1v1h-1zM769.5 356.5h1v1h-1zM769.5 406.5h1v1h-1zM769.5 456.5h1v1h-1zM769.5 506.5h1v1h-1zM769.5 556.5h1v1h-1zM769.5 606.5h1v1h-1zM769.5 656.5h1v1h-1zM769.5 706.5h1v1h-1zM819.5 156.5h1v1h-1zM819.5 206.5h1v1h-1zM819.5 256.5h1v1h-1zM819.5 306.5h1v1h-1zM819.5 356.5h1v1h-1zM819.5 406.5h1v1h-1zM819.5 456.5h1v1h-1zM819.5 506.5h1v1h-1zM819.5 556.5h1v1h-1zM819.5 606.5h1v1h-1zM819.5 656.5h1v1h-1zM819.5 706.5h1v1h-1zM869.5 156.5h1v1h-1zM869.5 206.5h1v1h-1zM869.5 256.5h1v1h-1zM869.5 306.5h1v1h-1zM869.5 356.5h1v1h-1zM869.5 406.5h1v1h-1zM869.5 456.5h1v1h-1zM869.5 506.5h1v1h-1zM869.5 556.5h1v1h-1zM869.5 606.5h1v1h-1zM869.5 656.5h1v1h-1zM869.5 706.5h1v1h-1zM919.5 156.5h1v1h-1zM919.5 206.5h1v1h-1zM919.5 256.5h1v1h-1zM919.5 306.5h1v1h-1zM919.5 356.5h1v1h-1zM919.5 406.5h1v1h-1zM919.5 456.5h1v1h-1zM919.5 506.5h1v1h-1zM919.5 556.5h1v1h-1zM919.5 606.5h1v1h-1zM919.5 656.5h1v1h-1zM919.5 706.5h1v1h-1zM969.5 156.5h1v1h-1zM969.5 206.5h1v1h-1zM969.5 256.5h1v1h-1zM969.5 306.5h1v1h-1zM969.5 356.5h1v1h-1zM969.5 406.5h1v1h-1zM969.5 456.5h1v1h-1zM969.5 506.5h1v1h-1zM969.5 556.5h1v1h-1zM969.5 606.5h1v1h-1zM969.5 656.5h1v1h-1zM969.5 706.5h1v1h-1zM1019.5 156.5h1v1h-1zM1019.5 206.5h1v1h-1zM1019.5 256.5h1v1h-1zM1019.5 306.5h1v1h-1zM1019.5 356.5h1v1h-1zM1019.5 406.5h1v1h-1zM1019.5 456.5h1v1h-1zM1019.5 506.5h1v1h-1zM1019.5 556.5h1v1h-1zM1019.5 606.5h1v1h-1zM1019.5 656.5h1v1h-1zM1019.5 706.5h1v1h-1zM1069.5 156.5h1v1h-1zM1069.5 206.5h1v1h-1zM1069.5 256.5h1v1h-1zM1069.5 306.5h1v1h-1zM1069.5 356.5h1v1h-1zM1069.5 406.5h1v1h-1zM1069.5 456.5h1v1h-1zM1069.5 506.5h1v1h-1zM1069.5 556.5h1v1h-1zM1069.5 606.5h1v1h-1zM1069.5 656.5h1v1h-1zM1069.5 706.5h1v1h-1zM1119.5 156.5h1v1h-1zM1119.5 206.5h1v1h-1zM1119.5 256.5h1v1h-1zM1119.5 306.5h1v1h-1zM1119.5 356.5h1v1h-1zM1119.5 406.5h1v1h-1zM1119.5 456.5h1v1h-1zM1119.5 506.5h1v1h-1zM1119.5 556.5h1v1h-1zM1119.5 606.5h1v1h-1zM1119.5 656.5h1v1h-1zM1119.5 706.5h1v1h-1z"/>
<rect x="100" y="706" width="40" height="2" fill="#5c0b0b"/>
<rect x="119" y="687" width="2" height="40" fill="#5c0b0b"/>
<rect x="419.5" y="556" width="451" height="2" fill="#bdbdbd"/>
<circle cx="870" cy="557" r="5" fill="none" stroke="#8e0000" stroke-width="1.05"/>
<rect x="869.2" y="552" width="1.6" height="10" fill="#800000"/>
<rect x="865" y="556.2" width="10" height="1.6" fill="#800000" opacity="0.6"/>
<defs><radialGradient id="rg" cx="617.3" cy="342.8" r="39.3" gradientUnits="userSpaceOnUse"><stop offset="0.76" stop-color="#2a3440" stop-opacity="0"/><stop offset="0.82" stop-color="#36434f" stop-opacity="0.7"/><stop offset="0.86" stop-color="#4f6070"/><stop offset="0.89" stop-color="#3f4d5a"/><stop offset="0.92" stop-color="#5e7182"/><stop offset="0.95" stop-color="#50606e"/><stop offset="0.975" stop-color="#6a7d8d"/><stop offset="1" stop-color="#5a6b7a" stop-opacity="0.4"/></radialGradient></defs>
<circle cx="617.3" cy="342.8" r="39.3" fill="url(#rg)"/>
<rect x="601.5" y="341.3" width="31" height="3" fill="#c2c2c2"/>
<rect x="615.8" y="327.3" width="3" height="31" fill="#c2c2c2"/>
<circle cx="617.3" cy="342.8" r="1.6" fill="#000"/>
</svg>
<!--/CANVAS-->
<!--RULERS-->
<svg class="a" style="left:95px;top:132px" width="1044" height="23" viewBox="95 132 1044 23">
<rect x="120" y="148" width="1" height="7" fill="#5a5a5a"/>
<text transform="translate(119.7 141) scale(0.93 1)" text-anchor="middle" font-size="9.4" fill="#111">0</text>
<rect x="170" y="148" width="1" height="7" fill="#5a5a5a"/>
<text transform="translate(169.7 141) scale(0.93 1)" text-anchor="middle" font-size="9.4" fill="#111">10</text>
<rect x="220" y="148" width="1" height="7" fill="#5a5a5a"/>
<text transform="translate(219.7 141) scale(0.93 1)" text-anchor="middle" font-size="9.4" fill="#111">20</text>
<rect x="270" y="148" width="1" height="7" fill="#5a5a5a"/>
<text transform="translate(269.7 141) scale(0.93 1)" text-anchor="middle" font-size="9.4" fill="#111">30</text>
<rect x="320" y="148" width="1" height="7" fill="#5a5a5a"/>
<text transform="translate(319.7 141) scale(0.93 1)" text-anchor="middle" font-size="9.4" fill="#111">40</text>
<rect x="370" y="148" width="1" height="7" fill="#5a5a5a"/>
<text transform="translate(369.7 141) scale(0.93 1)" text-anchor="middle" font-size="9.4" fill="#111">50</text>
<rect x="420" y="148" width="1" height="7" fill="#5a5a5a"/>
<text transform="translate(419.7 141) scale(0.93 1)" text-anchor="middle" font-size="9.4" fill="#111">60</text>
<rect x="470" y="148" width="1" height="7" fill="#5a5a5a"/>
<text transform="translate(469.7 141) scale(0.93 1)" text-anchor="middle" font-size="9.4" fill="#111">70</text>
<rect x="520" y="148" width="1" height="7" fill="#5a5a5a"/>
<text transform="translate(519.7 141) scale(0.93 1)" text-anchor="middle" font-size="9.4" fill="#111">80</text>
<rect x="570" y="148" width="1" height="7" fill="#5a5a5a"/>
<text transform="translate(569.7 141) scale(0.93 1)" text-anchor="middle" font-size="9.4" fill="#111">90</text>
<rect x="620" y="148" width="1" height="7" fill="#5a5a5a"/>
<text transform="translate(619.7 141) scale(0.93 1)" text-anchor="middle" font-size="9.4" fill="#111">100</text>
<rect x="670" y="148" width="1" height="7" fill="#5a5a5a"/>
<text transform="translate(669.7 141) scale(0.93 1)" text-anchor="middle" font-size="9.4" fill="#111">110</text>
<rect x="720" y="148" width="1" height="7" fill="#5a5a5a"/>
<text transform="translate(719.7 141) scale(0.93 1)" text-anchor="middle" font-size="9.4" fill="#111">120</text>
<rect x="770" y="148" width="1" height="7" fill="#5a5a5a"/>
<text transform="translate(769.7 141) scale(0.93 1)" text-anchor="middle" font-size="9.4" fill="#111">130</text>
<rect x="820" y="148" width="1" height="7" fill="#5a5a5a"/>
<text transform="translate(819.7 141) scale(0.93 1)" text-anchor="middle" font-size="9.4" fill="#111">140</text>
<rect x="870" y="148" width="1" height="7" fill="#5a5a5a"/>
<text transform="translate(869.7 141) scale(0.93 1)" text-anchor="middle" font-size="9.4" fill="#111">150</text>
<rect x="920" y="148" width="1" height="7" fill="#5a5a5a"/>
<text transform="translate(919.7 141) scale(0.93 1)" text-anchor="middle" font-size="9.4" fill="#111">160</text>
<rect x="970" y="148" width="1" height="7" fill="#5a5a5a"/>
<text transform="translate(969.7 141) scale(0.93 1)" text-anchor="middle" font-size="9.4" fill="#111">170</text>
<rect x="1020" y="148" width="1" height="7" fill="#5a5a5a"/>
<text transform="translate(1019.7 141) scale(0.93 1)" text-anchor="middle" font-size="9.4" fill="#111">180</text>
<rect x="1070" y="148" width="1" height="7" fill="#5a5a5a"/>
<text transform="translate(1069.7 141) scale(0.93 1)" text-anchor="middle" font-size="9.4" fill="#111">190</text>
<rect x="1120" y="148" width="1" height="7" fill="#5a5a5a"/>
<text transform="translate(1119.7 141) scale(0.93 1)" text-anchor="middle" font-size="9.4" fill="#111">200</text>
<path d="M611.8 145H623L617.4 151z" fill="#000"/>
</svg>
<svg class="a" style="left:72px;top:155px" width="23" height="577" viewBox="72 155 23 577">
<rect x="88" y="707" width="7" height="1" fill="#5a5a5a"/>
<text transform="translate(80.6 706.8) rotate(-90) scale(0.93 1)" text-anchor="middle" font-size="9.4" fill="#111">0</text>
<rect x="88" y="657" width="7" height="1" fill="#5a5a5a"/>
<text transform="translate(80.6 656.8) rotate(-90) scale(0.93 1)" text-anchor="middle" font-size="9.4" fill="#111">10</text>
<rect x="88" y="607" width="7" height="1" fill="#5a5a5a"/>
<text transform="translate(80.6 606.8) rotate(-90) scale(0.93 1)" text-anchor="middle" font-size="9.4" fill="#111">20</text>
<rect x="88" y="557" width="7" height="1" fill="#5a5a5a"/>
<text transform="translate(80.6 556.8) rotate(-90) scale(0.93 1)" text-anchor="middle" font-size="9.4" fill="#111">30</text>
<rect x="88" y="507" width="7" height="1" fill="#5a5a5a"/>
<text transform="translate(80.6 506.8) rotate(-90) scale(0.93 1)" text-anchor="middle" font-size="9.4" fill="#111">40</text>
<rect x="88" y="457" width="7" height="1" fill="#5a5a5a"/>
<text transform="translate(80.6 456.8) rotate(-90) scale(0.93 1)" text-anchor="middle" font-size="9.4" fill="#111">50</text>
<rect x="88" y="407" width="7" height="1" fill="#5a5a5a"/>
<text transform="translate(80.6 406.8) rotate(-90) scale(0.93 1)" text-anchor="middle" font-size="9.4" fill="#111">60</text>
<rect x="88" y="357" width="7" height="1" fill="#5a5a5a"/>
<text transform="translate(80.6 356.8) rotate(-90) scale(0.93 1)" text-anchor="middle" font-size="9.4" fill="#111">70</text>
<rect x="88" y="307" width="7" height="1" fill="#5a5a5a"/>
<text transform="translate(80.6 306.8) rotate(-90) scale(0.93 1)" text-anchor="middle" font-size="9.4" fill="#111">80</text>
<rect x="88" y="257" width="7" height="1" fill="#5a5a5a"/>
<text transform="translate(80.6 256.8) rotate(-90) scale(0.93 1)" text-anchor="middle" font-size="9.4" fill="#111">90</text>
<rect x="88" y="207" width="7" height="1" fill="#5a5a5a"/>
<text transform="translate(80.6 206.8) rotate(-90) scale(0.93 1)" text-anchor="middle" font-size="9.4" fill="#111">100</text>
<rect x="88" y="157" width="7" height="1" fill="#5a5a5a"/>
<text transform="translate(80.6 156.8) rotate(-90) scale(0.93 1)" text-anchor="middle" font-size="9.4" fill="#111">110</text>
<path d="M84 337V349L90 343z" fill="#000"/>
</svg>
<!--/RULERS-->
<div class="a" style="left:1139px;top:155px;width:16px;height:577px;background:#f8f8f8"></div>
<div class="a" style="left:1143px;top:158px;width:8px;height:410px;border-radius:4px;background:#808080"></div>
<div class="a" style="left:72px;top:732px;width:1084px;height:16px;background:#ececec"></div>
<div class="a" style="left:95px;top:732px;width:988px;height:16px;background:#f8f8f8"></div>
<div class="a" style="left:158px;top:736px;width:819px;height:7.6px;border-radius:4px;background:#808080"></div>
<span class="a" style="left:1102.5px;top:733px;font-size:13px;letter-spacing:-0.1px;color:#111">10 &lt; 100</span>
<div class="a" style="left:1154px;top:108px;width:2px;height:690px;background:#c4c4c4"></div>
<div class="a" style="left:72px;top:748px;width:1084px;height:2px;background:#c8c8c8"></div>
<!-- command -->
<div class="a" style="left:72px;top:750px;width:1082px;height:21.5px;background:#fff;border-bottom:1.5px solid #cbcbcb"></div>
<span class="a" style="left:77px;top:750.5px;font-size:13.4px;color:#1010e8"><i>Opdracht:</i> lp</span>
<div class="a" style="left:1138px;top:750px;width:15px;height:20px;background:#f8f8f8;border-left:1px solid #ececec"></div>
<div class="a" style="left:1142px;top:750px;width:8px;height:17px;border-radius:4px;background:#808080"></div>
<div class="a" style="left:72px;top:771px;width:1082px;height:27px;background:#ebebeb"></div>
<span class="a" style="left:73px;top:777.5px;font-size:13.3px;color:#111">Lijn, boog, cirkel of ellips kiezen:</span>
<div class="a" style="left:269px;top:776px;width:857px;height:18px;background:#fff"></div>
<div class="a" style="left:1127px;top:772px;width:26px;height:25.5px;background:#f0f0f0;border:1px solid #b8b8b8"></div>
<svg class="a" style="left:1127px;top:772px" width="26" height="26" viewBox="1127 772 26 26"><rect x="1133.6" y="780.6" width="12.8" height="8.8" fill="#f2f2f2" stroke="#333" stroke-width="0.9"/><rect x="1133.2" y="780.2" width="13.6" height="2.6" fill="#000"/><circle cx="1143.8" cy="781.4" r="0.6" fill="#aaa"/></svg>

<!-- right dock: Lagenlijst -->
<!--RIGHT-->
<svg class="a" style="left:1154px;top:107px" width="346" height="691" viewBox="1154 107 346 691">
<defs>
<linearGradient id="rtb" x1="0" y1="0" x2="0" y2="1"><stop offset="0" stop-color="#efefef"/><stop offset="1" stop-color="#dcdcdc"/></linearGradient>
<linearGradient id="rbt" x1="0" y1="0" x2="0" y2="1"><stop offset="0" stop-color="#f2f2f2"/><stop offset="0.35" stop-color="#e4e4e4"/><stop offset="1" stop-color="#f6f6f6"/></linearGradient>
<linearGradient id="rdk" x1="0" y1="0" x2="1" y2="0"><stop offset="0" stop-color="#e2e2e2"/><stop offset="0.08" stop-color="#efefef"/><stop offset="0.85" stop-color="#d4d4d4"/><stop offset="0.93" stop-color="#cdcdcd"/><stop offset="0.95" stop-color="#bdbdbd"/><stop offset="1" stop-color="#c6c6c6"/></linearGradient>
</defs>
<rect x="1154" y="107" width="301" height="691" fill="#fff"/>
<rect x="1154" y="107" width="1.3" height="691" fill="#d4d4d4"/><rect x="1454" y="107" width="1" height="691" fill="#d0d0d0"/>
<rect x="1155" y="108" width="299" height="21" fill="url(#rtb)"/>
<circle cx="1164" cy="118" r="6.9" fill="#6b6b6b"/><path d="M1161.2 115.2L1166.8 120.8M1166.8 115.2L1161.2 120.8" stroke="#fff" stroke-width="1.8"/>
<circle cx="1182" cy="118" r="6.9" fill="#6b6b6b"/><rect x="1179.8" y="117.2" width="4.8" height="3.8" fill="none" stroke="#fff" stroke-width="1.1"/><path d="M1181.5 115.6V114.6H1186.4V118.4H1185" fill="none" stroke="#fff" stroke-width="1.1"/>
<text x="1322" y="123.2" text-anchor="middle" font-family="Liberation Sans" font-size="12" fill="#222">Lagenlijst</text>
<rect x="1155" y="129.5" width="299" height="27.5" fill="#b0b0b0"/>
<rect x="1156.5" y="131.3" width="57.7" height="24" fill="url(#rbt)"/>
<rect x="1216" y="131.3" width="58" height="24" fill="url(#rbt)"/>
<rect x="1276" y="131.3" width="58" height="24" fill="url(#rbt)"/>
<rect x="1336" y="131.3" width="58" height="24" fill="url(#rbt)"/>
<rect x="1396" y="131.3" width="57.5" height="24" fill="url(#rbt)"/>
<path d="M1177.1000000000001 142.9Q1183.7 132.2 1192.3 142.4Q1185.7 153.0 1177.1000000000001 142.9Z" fill="#000"/><path d="M1179.8 142.9Q1184.2 137.2 1189.6000000000001 142.6Q1185.2 148.2 1179.8 142.9Z" fill="#fff"/><circle cx="1184.7" cy="142.2" r="3.1" fill="#000"/><circle cx="1185.3" cy="141.6" r="0.7" fill="#fff" opacity="0.7"/>
<path d="M1237.2 142.9Q1243.8 132.2 1252.3999999999999 142.4Q1245.8 153.0 1237.2 142.9Z" fill="#9a9a9a"/><path d="M1239.8999999999999 142.9Q1244.3 137.2 1249.7 142.6Q1245.3 148.2 1239.8999999999999 142.9Z" fill="#fff"/><circle cx="1244.8" cy="142.2" r="3.1" fill="#9a9a9a"/><circle cx="1245.3999999999999" cy="141.6" r="0.7" fill="#fff" opacity="0.7"/>
<path d="M1304.8 137V148.6M1299 142.8H1310.6" stroke="#e00000" stroke-width="3.2"/>
<path d="M1359.2 142.8H1370.8" stroke="#e00000" stroke-width="3.2"/>
<path d="M1421.59 148.87L1432.93 137.53L1430.67 135.27L1419.33 146.61Z" fill="#e0a030" stroke="#8a6420" stroke-width="0.7" stroke-linejoin="round"/><path d="M1431.23 139.23L1432.93 137.53L1430.67 135.27L1428.97 136.97Z" fill="#e82020" stroke="#a01010" stroke-width="0.6"/><path d="M1418.20 150.00L1421.59 148.87L1419.33 146.61Z" fill="#f0d8a8" stroke="#8a6420" stroke-width="0.6" stroke-linejoin="round"/><path d="M1418.20 150.00L1419.12 149.08" stroke="#333" stroke-width="1.1"/>
<rect x="1161.6" y="163.6" width="14.8" height="7.6" fill="none" stroke="#000" stroke-width="1.3"/>
<text transform="translate(1183 171.6) scale(0.9 1)" font-family="Liberation Sans" font-size="13.4" fill="#000">0</text>
<path d="M1397.62 172.40L1408.66 161.36L1406.54 159.24L1395.50 170.28Z" fill="#e0a030" stroke="#8a6420" stroke-width="0.7" stroke-linejoin="round"/><path d="M1406.96 163.06L1408.66 161.36L1406.54 159.24L1404.84 160.94Z" fill="#e82020" stroke="#a01010" stroke-width="0.6"/><path d="M1394.30 173.60L1397.62 172.40L1395.50 170.28Z" fill="#f0d8a8" stroke="#8a6420" stroke-width="0.6" stroke-linejoin="round"/><path d="M1394.30 173.60L1395.22 172.68" stroke="#333" stroke-width="1.1"/>
<path d="M1415.4 167.10000000000002Q1422 156.4 1430.6 166.60000000000002Q1424 177.20000000000002 1415.4 167.10000000000002Z" fill="#000"/><path d="M1418.1 167.10000000000002Q1422.5 161.4 1427.9 166.8Q1423.5 172.4 1418.1 167.10000000000002Z" fill="#fff"/><circle cx="1423" cy="166.4" r="3.1" fill="#000"/><circle cx="1423.6" cy="165.8" r="0.7" fill="#fff" opacity="0.7"/>
<path d="M1441.8 166V163Q1441.8 159.2 1445 159.2Q1448.2 159.2 1448.2 163V166" fill="none" stroke="#b4b4b4" stroke-width="1.5"/><rect x="1440.6" y="166" width="8.8" height="7" rx="0.8" fill="#b4b4b4"/>
<rect x="1455" y="107" width="45" height="691" fill="url(#rdk)"/>
<rect x="1462" y="116" width="2" height="2" fill="#a4a4a4"/>
<rect x="1468" y="116" width="2" height="2" fill="#a4a4a4"/>
<rect x="1474" y="116" width="2" height="2" fill="#a4a4a4"/>
<rect x="1480" y="116" width="2" height="2" fill="#a4a4a4"/>
<rect x="1486" y="116" width="2" height="2" fill="#a4a4a4"/>
<rect x="1458" y="260.5" width="1" height="1" fill="#7a7a7a"/>
<rect x="1461" y="260.5" width="1" height="1" fill="#7a7a7a"/>
<rect x="1464" y="260.5" width="1" height="1" fill="#7a7a7a"/>
<rect x="1467" y="260.5" width="1" height="1" fill="#7a7a7a"/>
<rect x="1470" y="260.5" width="1" height="1" fill="#7a7a7a"/>
<rect x="1473" y="260.5" width="1" height="1" fill="#7a7a7a"/>
<rect x="1476" y="260.5" width="1" height="1" fill="#7a7a7a"/>
<rect x="1479" y="260.5" width="1" height="1" fill="#7a7a7a"/>
<rect x="1482" y="260.5" width="1" height="1" fill="#7a7a7a"/>
<rect x="1485" y="260.5" width="1" height="1" fill="#7a7a7a"/>
<rect x="1488" y="260.5" width="1" height="1" fill="#7a7a7a"/>
<rect x="1491" y="260.5" width="1" height="1" fill="#7a7a7a"/>
<rect x="1494" y="260.5" width="1" height="1" fill="#7a7a7a"/>
<rect x="1497" y="260.5" width="1" height="1" fill="#7a7a7a"/>
<rect x="1458" y="408.5" width="1" height="1" fill="#7a7a7a"/>
<rect x="1461" y="408.5" width="1" height="1" fill="#7a7a7a"/>
<rect x="1464" y="408.5" width="1" height="1" fill="#7a7a7a"/>
<rect x="1467" y="408.5" width="1" height="1" fill="#7a7a7a"/>
<rect x="1470" y="408.5" width="1" height="1" fill="#7a7a7a"/>
<rect x="1473" y="408.5" width="1" height="1" fill="#7a7a7a"/>
<rect x="1476" y="408.5" width="1" height="1" fill="#7a7a7a"/>
<rect x="1479" y="408.5" width="1" height="1" fill="#7a7a7a"/>
<rect x="1482" y="408.5" width="1" height="1" fill="#7a7a7a"/>
<rect x="1485" y="408.5" width="1" height="1" fill="#7a7a7a"/>
<rect x="1488" y="408.5" width="1" height="1" fill="#7a7a7a"/>
<rect x="1491" y="408.5" width="1" height="1" fill="#7a7a7a"/>
<rect x="1494" y="408.5" width="1" height="1" fill="#7a7a7a"/>
<rect x="1497" y="408.5" width="1" height="1" fill="#7a7a7a"/>
<rect x="1456.7" y="120.5" width="41.2" height="41.8" rx="6" fill="#c2c2c2"/>
<rect x="1456.2" y="417" width="42.5" height="42.7" rx="6" fill="#c0c0c0"/>
<rect x="1463.5" y="127.5" width="27" height="27" fill="#fff" stroke="#000" stroke-width="1"/><rect x="1463.5" y="127.5" width="27" height="4.3" fill="#000"/><rect x="1465" y="128.6" width="2.8" height="2.8" fill="#fff"/>
<rect x="1463.5" y="174.5" width="27" height="27" fill="#fff" stroke="#000" stroke-width="1"/><rect x="1463.5" y="174.5" width="27" height="4.3" fill="#000"/><rect x="1465" y="175.6" width="2.8" height="2.8" fill="#fff"/>
<rect x="1463.5" y="220.5" width="27" height="27" fill="#fff" stroke="#000" stroke-width="1"/><rect x="1463.5" y="220.5" width="27" height="4.3" fill="#000"/><rect x="1465" y="221.6" width="2.8" height="2.8" fill="#fff"/>
<rect x="1463.5" y="276.5" width="27" height="27" fill="#fff" stroke="#000" stroke-width="1"/><rect x="1463.5" y="276.5" width="27" height="4.3" fill="#000"/><rect x="1465" y="277.6" width="2.8" height="2.8" fill="#fff"/>
<rect x="1463.5" y="322.5" width="27" height="27" fill="#fff" stroke="#000" stroke-width="1"/><rect x="1463.5" y="322.5" width="27" height="4.3" fill="#000"/><rect x="1465" y="323.6" width="2.8" height="2.8" fill="#fff"/>
<rect x="1463.5" y="368.0" width="27" height="27" fill="#fff" stroke="#000" stroke-width="1"/><rect x="1463.5" y="368.0" width="27" height="4.3" fill="#000"/><rect x="1465" y="369.1" width="2.8" height="2.8" fill="#fff"/>
<rect x="1463.5" y="424.7" width="27" height="27" fill="#fff" stroke="#000" stroke-width="1"/><rect x="1463.5" y="424.7" width="27" height="4.3" fill="#000"/><rect x="1465" y="425.8" width="2.8" height="2.8" fill="#fff"/>
<rect x="1463.5" y="471.6" width="27" height="27" fill="#fff" stroke="#000" stroke-width="1"/><rect x="1463.5" y="471.6" width="27" height="4.3" fill="#000"/><rect x="1465" y="472.70000000000005" width="2.8" height="2.8" fill="#fff"/>
<path d="M1470 139L1477 136V148L1470 151Z" fill="#999" stroke="#555" stroke-width="0.8"/><path d="M1473 138L1482 135V147L1473 150Z" fill="#ddd" stroke="#666" stroke-width="0.8"/><path d="M1476 138L1485 135V147L1476 150Z" fill="#fff" stroke="#555" stroke-width="0.8"/><path d="M1478 147L1481.5 139L1482 146Z" fill="none" stroke="#f03030" stroke-width="0.8"/>
<rect x="1470.5" y="184" width="10" height="7.5" fill="#f2eac0" stroke="#777" stroke-width="0.8"/><circle cx="1480" cy="191.5" r="4.6" fill="#f2eac0" fill-opacity="0.8" stroke="#777" stroke-width="0.8"/>
<rect x="1468.5" y="230" width="17" height="12" rx="2" fill="#f6f6f6" stroke="#c8d4ec" stroke-width="1"/>
<rect x="1467.5" y="285" width="3.5" height="3" fill="#000"/><rect x="1473" y="285" width="13.5" height="3" fill="#fff" stroke="#000" stroke-width="0.8"/>
<rect x="1467.5" y="290" width="3.5" height="3" fill="#000"/><rect x="1473" y="290" width="13.5" height="3" fill="#fff" stroke="#000" stroke-width="0.8"/>
<rect x="1467.5" y="295" width="3.5" height="3" fill="#000"/><rect x="1473" y="295" width="13.5" height="3" fill="#fff" stroke="#000" stroke-width="0.8"/>
<path d="M1469 333H1485L1479 339V345L1475 346V339Z" fill="#aaa" stroke="#777" stroke-width="0.6"/><ellipse cx="1477" cy="333" rx="8" ry="1.5" fill="#ccc" stroke="#888" stroke-width="0.5"/>
<path d="M1470 378.5L1475 381.5V389.5L1470 392.5Z" fill="#fff" stroke="#555" stroke-width="0.8"/><rect x="1475" y="380.5" width="9" height="9" fill="#ddd" stroke="#555" stroke-width="0.8"/><path d="M1466 385.0H1488" stroke="#f08080" stroke-width="0.8" stroke-dasharray="1.5 1"/>
<path d="M1466.5 431.2h12M1466.5 434.2h11M1466.5 437.2h12M1466.5 440.2h12" stroke="#666" stroke-width="0.7"/><rect x="1464" y="447.2" width="26" height="4" fill="#fff" stroke="#000" stroke-width="0.6"/><path d="M1466 449.2h3M1472 449.2h16" stroke="#333" stroke-width="0.8"/>
<rect x="1470.5" y="480.1" width="12.5" height="15.5" rx="1" fill="#c08530"/><rect x="1472" y="481.90000000000003" width="9.5" height="12.2" fill="#fafafa"/><path d="M1473.5 485.1h6.5M1473.5 487.1h6.5M1473.5 489.1h5" stroke="#bbb" stroke-width="0.7"/><rect x="1473.5" y="478.6" width="6.5" height="3" rx="0.7" fill="#999"/>
</svg>
<!--/RIGHT-->

<!-- far right toolbar -->


<!-- status bar -->
<div class="a" style="left:0;top:798px;width:1500px;height:46px;background:#dcdcdc"></div>
<span class="st" style="left:2px;top:806.7px">99.4,72.8</span>
<span class="st" style="left:2px;top:826.7px">@-50.6,42.8</span>
<div class="a" style="left:253.5px;top:802px;width:1px;height:40px;background:#8a8a8a"></div>
<span class="st" style="left:256px;top:806.7px">123.208&lt;36°</span>
<span class="st" style="left:256px;top:826.7px">@66.2737&lt;140°</span>
<span class="st" style="left:553px;top:817px">Lijn, boog, cirkel of ellips kiezen</span>
<span class="st" style="left:754px;top:817px">Annuleer</span>
<span class="st" style="left:949px;top:817px">Geen objecten geselecteerd.</span>
<svg class="a" style="left:0;top:798px" width="1500" height="46" viewBox="0 798 1500 46">
<circle cx="509.4" cy="822" r="3" fill="#c6c6c6"/><circle cx="943.4" cy="822" r="3" fill="#c6c6c6"/><circle cx="1272" cy="822" r="3" fill="#c6c6c6"/>
<path d="M717.5 814.5Q717.5 806.3 726 806.3Q734.5 806.3 734.5 814.5V826.5Q734.5 835.5 726 835.5Q717.5 835.5 717.5 826.5Z" fill="#fff" stroke="#333" stroke-width="0.9"/>
<path d="M717.8 819.3Q726 816.8 734.2 819.3M726 815.2V818" fill="none" stroke="#333" stroke-width="0.9"/>
<rect x="724.6" y="808.5" width="2.8" height="6.8" rx="1.4" fill="#fff" stroke="#333" stroke-width="0.8"/>
</svg>
<svg class="a" style="left:94px;top:111px" width="16" height="16" viewBox="94 111 16 16">
<circle cx="102.2" cy="118.9" r="5.7" fill="#eef0f6" stroke="#33489a" stroke-width="2.5"/><circle cx="102.2" cy="118.9" r="6.9" fill="none" stroke="#6f82c0" stroke-width="0.5" opacity="0.6"/>
<path d="M98.5 117.5L105 115.5M99 120.5L104 121.5" stroke="#d88" stroke-width="0.6"/>
<path d="M102.5 118.5L107.5 124.5" stroke="#f0a020" stroke-width="2.2"/><circle cx="108.2" cy="125" r="1.1" fill="#e05050"/>
</svg>
</body></html>
